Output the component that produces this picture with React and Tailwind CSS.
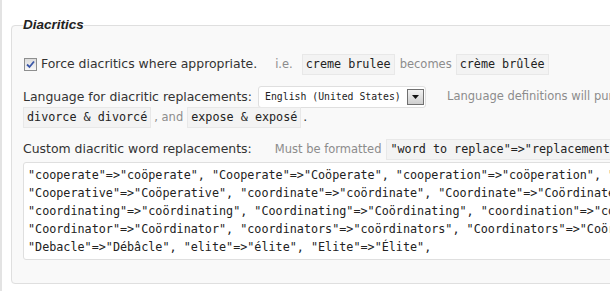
import React from "react";

const sans = { fontFamily: '"DejaVu Sans", Verdana, sans-serif' };
const mono = { fontFamily: '"DejaVu Sans Mono", "Liberation Mono", monospace' };
const legendFont = { fontFamily: '"Liberation Sans", Arial, sans-serif' };

function Code({ children, className = "" }) {
  return (
    <span
      style={mono}
      className={`inline-flex h-[21px] items-center whitespace-pre border border-[#e8e8e8] bg-[#f3f3f3] px-[3px] text-[11.75px] text-[#222] ${className}`}
    >
      {children}
    </span>
  );
}

function Muted({ children, className = "" }) {
  return <span className={`text-[11.5px] text-[#8c8c8c] ${className}`}>{children}</span>;
}

const lines = [
  '"cooperate"=>"coöperate", "Cooperate"=>"Coöperate", "cooperation"=>"coöperation", "Cooperation"=>"Coöperation",',
  '"Cooperative"=>"Coöperative", "coordinate"=>"coördinate", "Coordinate"=>"Coördinate", "coordinated"=>"coördinated",',
  '"coordinating"=>"coördinating", "Coordinating"=>"Coördinating", "coordination"=>"coördination", "Coordination"=>"Coördination",',
  '"Coordinator"=>"Coördinator", "coordinators"=>"coördinators", "Coordinators"=>"Coördinators", "debacle"=>"débâcle",',
  '"Debacle"=>"Débâcle", "elite"=>"élite", "Elite"=>"Élite",',
];

export default function App() {
  return (
    <div
      style={sans}
      className="h-[291px] w-[610px] overflow-hidden border-l-2 border-[#e3e3e3] bg-white pl-[9px] text-[12.45px] text-[#333]"
    >
      <fieldset className="mt-[17px] h-[267px] w-[620px] rounded-[4px] border border-[#dfdfdf] bg-[#f9f9f9] pl-[11px]">
        <legend
          style={legendFont}
          className="px-0 text-[13.5px] font-bold italic leading-[16px] text-[#222]"
        >
          Diacritics
        </legend>

        <div className="mt-[21px] flex h-[21px] items-center whitespace-nowrap">
          <span className="ml-px flex h-[13px] w-[13px] items-center justify-center border border-[#8e8f8f] bg-gradient-to-b from-[#dcdcdc] to-[#f8f8f8]">
            <svg width="9" height="9" viewBox="0 0 9 9">
              <path d="M1 4.5 L3.5 7 L8 1.5" fill="none" stroke="#3a57a8" strokeWidth="1.8" />
            </svg>
          </span>
          <span className="ml-[4px]">Force diacritics where appropriate.</span>
          <Muted className="ml-[18px]">i.e.</Muted>
          <Code className="ml-[9px]">creme brulee</Code>
          <Muted className="ml-[5px]">becomes</Muted>
          <Code className="ml-[4px]">crème brûlée</Code>
        </div>

        <div className="mt-[12px] flex h-[20px] items-center whitespace-nowrap">
          <span>Language for diacritic replacements:</span>
          <span className="ml-[6px] flex h-[22px] w-[168px] items-center justify-between rounded-[3px] border border-[#dfdfdf] bg-white pl-[6px] pr-[1px]">
            <span style={mono} className="text-[9.8px] text-[#222]">English (United States)</span>
            <span className="flex h-[16px] w-[17px] items-center justify-center border border-[#707070] bg-gradient-to-b from-[#f2f2f2] to-[#cfcfcf]">
              <svg width="7" height="4" viewBox="0 0 7 4">
                <path d="M0 0 H7 L3.5 4 Z" fill="#111" />
              </svg>
            </span>
          </span>
          <Muted className="ml-[21px]">Language definitions will purposefully replace</Muted>
        </div>
        <div className="flex h-[21px] items-center whitespace-nowrap">
          <Code>divorce &amp; divorcé</Code>
          <Muted className="ml-[3px]">, and</Muted>
          <Code className="ml-[4px]">expose &amp; exposé</Code>
          <span className="ml-[2px]">.</span>
        </div>

        <div className="mt-[11px] flex h-[21px] items-center whitespace-nowrap">
          <span>Custom diacritic word replacements:</span>
          <Muted className="ml-[23px]">Must be formatted</Muted>
          <Code className="ml-[5px]">"word to replace"=&gt;"replacement word"</Code>
        </div>

        <div
          style={mono}
          className="mt-[2px] h-[98px] w-[600px] overflow-hidden whitespace-pre rounded-[3px] border border-[#dfdfdf] bg-white pl-[4px] pt-[3px] text-[11.75px] leading-[18px] text-[#222]"
        >
          {lines.map((l, i) => (
            <div key={i}>{l}</div>
          ))}
        </div>
      </fieldset>
    </div>
  );
}
